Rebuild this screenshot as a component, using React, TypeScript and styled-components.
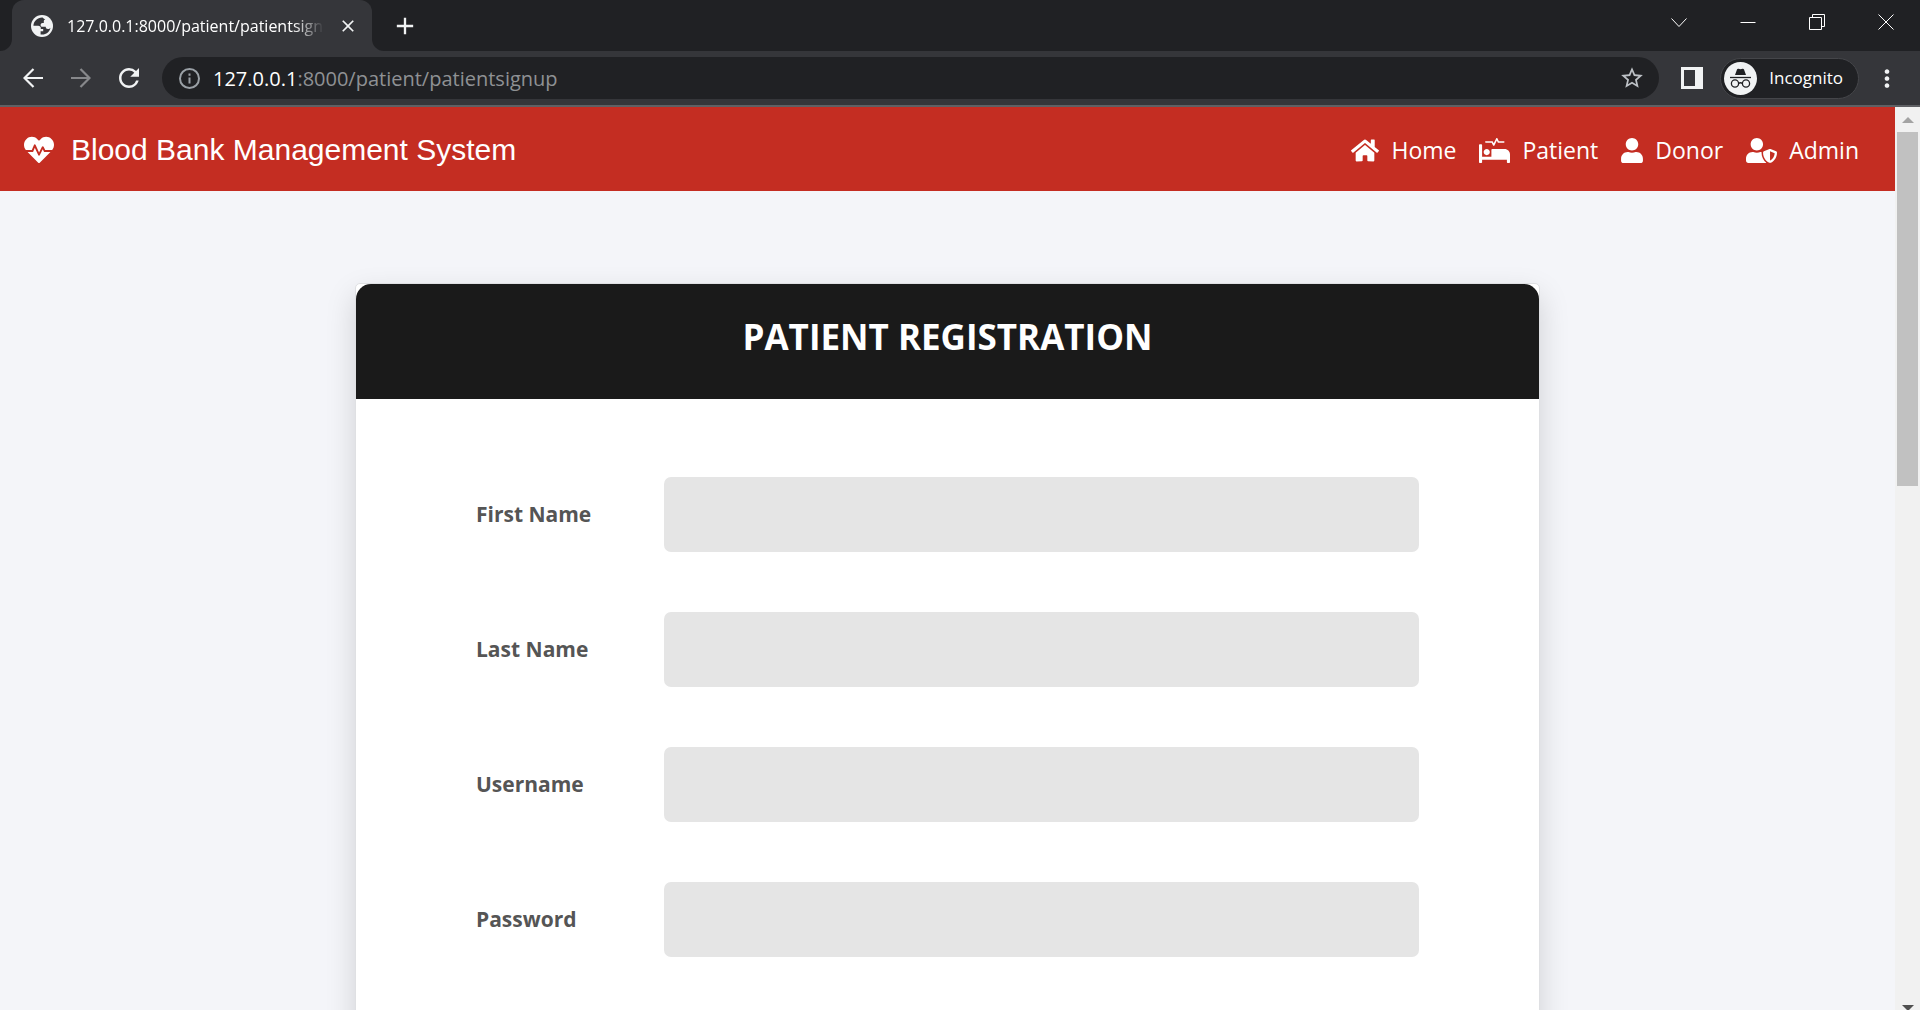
import React, { useState } from "react";
import styled, { createGlobalStyle } from "styled-components";
import { FaHeartbeat, FaHome, FaProcedures, FaUser, FaUserShield } from "react-icons/fa";
import { MdAdd, MdClose, MdMoreVert, MdRefresh, MdStarBorder } from "react-icons/md";

const ui = `"Segoe UI", "Open Sans", "Noto Sans", sans-serif`;

const GlobalStyle = createGlobalStyle`
  *, *::before, *::after { box-sizing: border-box; }
  body { margin: 0; font-family: ${ui}; }
  button, input { font: inherit; }
`;

const Window = styled.div`
  display: flex;
  flex-direction: column;
  height: 100vh;
  overflow: hidden;
`;

const TabStrip = styled.div`
  display: flex;
  height: 51px;
  flex: none;
  background: #35363a;
  color: #fff;
`;

const Lead = styled.div`
  width: 12px;
  background: #202124;
  border-bottom-right-radius: 12px;
`;

const TabBack = styled.div`
  background: linear-gradient(#202124 50%, #35363a 50%);
`;

const Tab = styled.div`
  display: flex;
  align-items: center;
  gap: 14px;
  width: 360px;
  height: 100%;
  padding: 0 14px 0 19px;
  border-radius: 12px 12px 0 0;
  background: #35363a;
`;

const TabTitle = styled.span`
  flex: 1;
  min-width: 0;
  overflow: hidden;
  white-space: nowrap;
  font-size: 16px;
  line-height: 24px;
  mask-image: linear-gradient(to right, #000 88%, transparent);
`;

const StripRest = styled.div`
  display: flex;
  flex: 1;
  align-items: center;
  border-bottom-left-radius: 12px;
  background: #202124;
`;

const IconButton = styled.button<{ $size?: number; $dim?: boolean }>`
  display: flex;
  align-items: center;
  justify-content: center;
  width: ${(p) => p.$size ?? 28}px;
  height: ${(p) => p.$size ?? 28}px;
  flex: none;
  padding: 0;
  border: 0;
  background: none;
  color: ${(p) => (p.$dim ? "#87888b" : "#f1f3f4")};
`;

const NewTab = styled(IconButton)`
  margin-left: 19px;
`;

const WindowControls = styled.div`
  display: flex;
  gap: 41px;
  margin-left: auto;
  padding: 0 20px 8px 0;
`;

const Toolbar = styled.div`
  display: flex;
  flex: none;
  align-items: center;
  height: 56px;
  padding: 0 19px 0 18px;
  border-bottom: 2px solid #5f6064;
  background: #35363a;
  color: #fff;
`;

const NavButtons = styled.div`
  display: flex;
  gap: 18px;
  margin-right: 18px;
`;

const AddressBar = styled.form`
  display: flex;
  flex: 1;
  align-items: center;
  height: 42px;
  padding: 0 13px;
  border-radius: 21px;
  background: #202124;
`;

const Address = styled.div`
  flex: 1;
  padding: 2px 0 0 10px;
  color: #8f9194;
  font-size: 20px;
  line-height: 28px;
`;

const Host = styled.span`
  color: #fff;
`;

const SidePanel = styled(IconButton)`
  margin: 0 14px 0 19px;
`;

const Profile = styled.button`
  display: flex;
  align-items: center;
  gap: 12px;
  height: 41px;
  padding: 0 15px 0 3px;
  border: 1px solid #45464a;
  border-radius: 21px;
  background: #202124;
  color: #fff;
  font-size: 17px;
  line-height: 24px;
`;

const More = styled(IconButton)`
  margin-left: 14px;
`;

const Viewport = styled.div`
  display: flex;
  flex: 1;
  min-height: 0;
`;

const Page = styled.div`
  flex: 1;
  min-width: 0;
  overflow: hidden;
  background: #f4f5f9;
`;

const Header = styled.header`
  display: flex;
  align-items: center;
  justify-content: space-between;
  height: 84px;
  padding: 2px 36px 0 24px;
  background: #c42d22;
  color: #fff;
`;

const Brand = styled.a`
  display: flex;
  align-items: center;
  gap: 17px;
  color: inherit;
  font: 30px/36px "Liberation Sans", Arial, sans-serif;
  text-decoration: none;
`;

const Menu = styled.nav`
  display: flex;
  gap: 23px;
`;

const MenuLink = styled.a<{ $icon: number }>`
  display: flex;
  align-items: center;
  gap: 12px;
  color: inherit;
  font-size: 23px;
  line-height: 36px;
  text-decoration: none;

  svg {
    flex: none;
    width: ${(p) => p.$icon}px;
    height: 25px;
  }
`;

const Card = styled.main`
  max-width: 1185px;
  margin: 92px auto 0;
  border: 1px solid #dfe0e3;
  border-radius: 5px;
  background: #fff;
  box-shadow: 0 12px 30px rgba(0, 0, 0, 0.15);
`;

const CardHeading = styled.div`
  height: 115px;
  padding-top: 29px;
  border-radius: 15px 15px 0 0;
  background: #1a1a1a;
  color: #fff;
  text-align: center;
`;

const Title = styled.h2`
  margin: 0;
  font-size: 35px;
  font-weight: 700;
  line-height: 48px;
`;

const Form = styled.form`
  display: flex;
  flex-direction: column;
  gap: 60px;
  padding: 78px 120px;
`;

const Row = styled.div`
  display: flex;
  align-items: center;
`;

const Label = styled.label`
  width: 188px;
  padding-bottom: 2px;
  color: #555;
  font-size: 21px;
  font-weight: 700;
  line-height: 32px;
`;

const Field = styled.input`
  flex: 1;
  min-width: 0;
  height: 75px;
  padding: 0 24px;
  border: 0;
  border-radius: 7px;
  background: #e5e5e5;
  color: #555;
  font-size: 21px;
`;

const Scrollbar = styled.div`
  display: flex;
  flex-direction: column;
  align-items: center;
  flex: none;
  width: 25px;
  background: #f1f1f1;
`;

const ScrollEnd = styled.div<{ $down?: boolean }>`
  display: flex;
  justify-content: center;
  height: ${(p) => (p.$down ? 15 : 25)}px;
  padding-top: 10px;
  overflow: hidden;
  color: ${(p) => (p.$down ? "#505050" : "#a3a3a3")};
`;

const ScrollTrack = styled.div`
  flex: 1;
`;

const ScrollThumb = styled.div`
  width: 21px;
  height: 41%;
  background: #c1c1c1;
`;

const fields = [
  { id: "first_name", label: "First Name", type: "text" },
  { id: "last_name", label: "Last Name", type: "text" },
  { id: "username", label: "Username", type: "text" },
  { id: "password", label: "Password", type: "password" },
];

const menu = [
  { label: "Home", Icon: FaHome, width: 28 },
  { label: "Patient", Icon: FaProcedures, width: 31 },
  { label: "Donor", Icon: FaUser, width: 22 },
  { label: "Admin", Icon: FaUserShield, width: 31 },
];

const Globe = () => (
  <svg width="22" height="22" viewBox="0 0 22 22" aria-hidden="true">
    <circle cx="11" cy="11" r="11" fill="#f1f3f4" />
    <path
      d="M11.500 2.400C6.600 2.200 2.600 6 2.400 10.800h4.800c1.600 0 2.600.9 2.600 2.300v1h2.400v2.200H9.600v3.100c4.500.9 9-2 9.900-6.600-.6.900-1.400 1.200-2.500 1.200-1.500 0-2.200-.8-2.300-2.200h-3.300c-1.200 0-1.800-.7-1.800-1.800 0-1.300.8-2 2-2h1.200V6.200c0-1 .5-1.600 1.500-1.700-.9-.3-1.700-1-2.800-2.100z"
      fill="#35363a"
    />
  </svg>
);

const Arrow = ({ forward = false }: { forward?: boolean }) => (
  <svg width="20" height="20" viewBox="0 0 20 20" fill="none" stroke="currentColor" strokeWidth="2.200">
    <path d={forward ? "M0 10h18.500M9.500 1l9 9-9 9" : "M20 10H1.500M10.500 1l-9 9 9 9"} />
  </svg>
);

const Info = () => (
  <svg width="21" height="21" viewBox="0 0 21 21" fill="none" stroke="#9aa0a6" strokeWidth="2">
    <circle cx="10.500" cy="10.500" r="9.500" />
    <path d="M10.500 9.500v6M10.500 5.500v2.200" />
  </svg>
);

const Incognito = () => (
  <svg width="33" height="33" viewBox="0 0 33 33" aria-hidden="true">
    <circle cx="16.500" cy="16.500" r="16.500" fill="#f1f3f4" />
    <path d="M11 13l2-5.500c.2-.7.8-1 1.500-.8l2 .6 2-.6c.7-.2 1.300.1 1.500.8L22 13z" fill="#202124" />
    <path d="M6 15.500h21" stroke="#202124" strokeWidth="1.300" />
    <g fill="none" stroke="#202124" strokeWidth="1.300">
      <circle cx="11" cy="21.500" r="3.600" />
      <circle cx="22" cy="21.500" r="3.600" />
      <path d="M14.500 21.500q2-1.500 4 0" />
    </g>
  </svg>
);

const thin = { fill: "none", stroke: "#fff", strokeWidth: 1 };

export default function App() {
  const [values, setValues] = useState<Record<string, string>>({});
  return (
    <>
      <GlobalStyle />
      <Window>
        <TabStrip>
          <Lead />
          <TabBack>
            <Tab>
              <Globe />
              <TabTitle>127.0.0.1:8000/patient/patientsignup</TabTitle>
              <IconButton $size={20} aria-label="Close tab">
                <MdClose size={20} />
              </IconButton>
            </Tab>
          </TabBack>
          <StripRest>
            <NewTab aria-label="New tab">
              <MdAdd size={30} />
            </NewTab>
            <WindowControls>
              <IconButton aria-label="Search tabs">
                <svg width="16" height="16" viewBox="0 0 16 16" {...thin}>
                  <path d="M.5 4.500l7.500 8 7.500-8" />
                </svg>
              </IconButton>
              <IconButton aria-label="Minimize">
                <svg width="16" height="16" viewBox="0 0 16 16" {...thin}>
                  <path d="M.5 8.500h15" />
                </svg>
              </IconButton>
              <IconButton aria-label="Restore">
                <svg width="16" height="16" viewBox="0 0 16 16" {...thin}>
                  <path d="M.5 3.500h12v12H.5zM3.500 3.500v-3h12v12h-3" />
                </svg>
              </IconButton>
              <IconButton aria-label="Close window">
                <svg width="16" height="16" viewBox="0 0 16 16" {...thin}>
                  <path d="M.5.5l15 15M15.500.5l-15 15" />
                </svg>
              </IconButton>
            </WindowControls>
          </StripRest>
        </TabStrip>
        <Toolbar>
          <NavButtons>
            <IconButton $size={30} aria-label="Back">
              <Arrow />
            </IconButton>
            <IconButton $size={30} $dim aria-label="Forward">
              <Arrow forward />
            </IconButton>
            <IconButton $size={30} aria-label="Reload">
              <MdRefresh size={30} />
            </IconButton>
          </NavButtons>
          <AddressBar onSubmit={(e) => e.preventDefault()}>
            <IconButton type="button" aria-label="Site information">
              <Info />
            </IconButton>
            <Address>
              <Host>127.0.0.1</Host>:8000/patient/patientsignup
            </Address>
            <IconButton type="button" aria-label="Bookmark this page">
              <MdStarBorder size={26} color="#bdc1c6" />
            </IconButton>
          </AddressBar>
          <SidePanel aria-label="Side panel">
            <svg width="22" height="22" viewBox="0 0 22 22">
              <path d="M0 0h22v22H0zM3 3v16h11V3z" fill="#f1f3f4" fillRule="evenodd" />
            </svg>
          </SidePanel>
          <Profile>
            <Incognito />
            Incognito
          </Profile>
          <More aria-label="Menu">
            <MdMoreVert size={29} />
          </More>
        </Toolbar>
        <Viewport>
          <Page>
            <Header>
              <Brand href="#">
                <FaHeartbeat size={30} />
                Blood Bank Management System
              </Brand>
              <Menu>
                {menu.map(({ label, Icon, width }) => (
                  <MenuLink key={label} href="#" $icon={width}>
                    <Icon />
                    {label}
                  </MenuLink>
                ))}
              </Menu>
            </Header>
            <Card>
              <CardHeading>
                <Title>PATIENT REGISTRATION</Title>
              </CardHeading>
              <Form>
                {fields.map(({ id, label, type }) => (
                  <Row key={id}>
                    <Label htmlFor={id}>{label}</Label>
                    <Field
                      id={id}
                      type={type}
                      value={values[id] ?? ""}
                      onChange={(e) => setValues({ ...values, [id]: e.target.value })}
                    />
                  </Row>
                ))}
              </Form>
            </Card>
          </Page>
          <Scrollbar aria-hidden="true">
            <ScrollEnd>
              <svg width="12" height="6" viewBox="0 0 12 6">
                <path d="M0 6l6-6 6 6z" fill="currentColor" />
              </svg>
            </ScrollEnd>
            <ScrollTrack>
              <ScrollThumb />
            </ScrollTrack>
            <ScrollEnd $down>
              <svg width="12" height="6" viewBox="0 0 12 6">
                <path d="M0 0l6 6 6-6z" fill="currentColor" />
              </svg>
            </ScrollEnd>
          </Scrollbar>
        </Viewport>
      </Window>
    </>
  );
}
